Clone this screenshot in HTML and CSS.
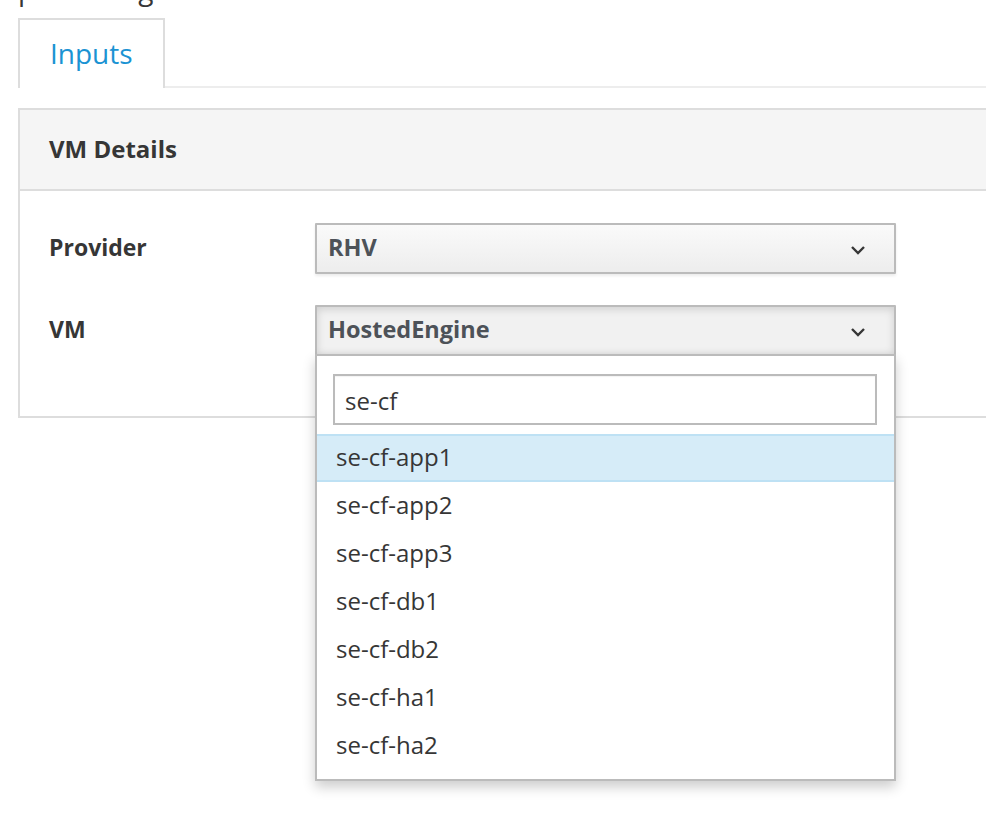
FILE: index.html
```html
<!DOCTYPE html>
<html lang="en">
<head>
<meta charset="utf-8">
<title>Inputs</title>
<link rel="stylesheet" href="styles.css">
</head>
<body>
<h1 class="page-title">publishing</h1>
<div class="content">
  <ul class="tabs">
    <li class="tab active">Inputs</li>
  </ul>
  <section class="panel">
    <div class="panel-heading">VM Details</div>
    <div class="panel-body">
      <div class="form-row">
        <label class="form-label">Provider</label>
        <div class="select">
          <button class="select-btn">
            <span class="select-text">RHV</span>
            <svg class="caret" width="16" height="10" viewBox="0 0 16 10"><polyline points="2,2 8,8 14,2" fill="none" stroke="#363636" stroke-width="2.4"/></svg>
          </button>
        </div>
      </div>
      <div class="form-row">
        <label class="form-label">VM</label>
        <div class="select open">
          <button class="select-btn">
            <span class="select-text">HostedEngine</span>
            <svg class="caret" width="16" height="10" viewBox="0 0 16 10"><polyline points="2,2 8,8 14,2" fill="none" stroke="#363636" stroke-width="2.4"/></svg>
          </button>
          <div class="menu">
            <div class="search-box"><div class="search-input">se-cf</div></div>
            <ul class="options">
              <li class="option active">se-cf-app1</li>
              <li class="option">se-cf-app2</li>
              <li class="option">se-cf-app3</li>
              <li class="option">se-cf-db1</li>
              <li class="option">se-cf-db2</li>
              <li class="option">se-cf-ha1</li>
              <li class="option">se-cf-ha2</li>
            </ul>
          </div>
        </div>
      </div>
    </div>
  </section>
</div>
</body>
</html>
```
FILE: styles.css
```css
html {
  overflow-x: hidden;
}

body {
  margin: 0;
  padding: 0;
  min-height: 822px;
  background: #ffffff;
  font-family: "Open Sans", "DejaVu Sans", sans-serif;
  color: #363636;
}

.page-title {
  margin: -27px 0 0 0;
  padding-left: 18px;
  font-size: 28px;
  font-weight: 400;
  line-height: 32px;
  height: 32px;
  color: #363636;
}

.content {
  margin: 13px -40px 0 18px;
}

.tabs {
  list-style: none;
  margin: 0;
  padding: 0;
  display: flex;
  border-bottom: 2px solid #ededed;
  height: 68px;
}

.tab {
  box-sizing: border-box;
  border: 2px solid #dddddd;
  border-bottom: none;
  background: #ffffff;
  padding: 0 30px 2px 30px;
  height: 70px;
  line-height: 66px;
  font-size: 28px;
  color: #1b93d3;
  margin-bottom: -2px;
}

.panel {
  margin-top: 20px;
  border: 2px solid #dddddd;
}

.panel-heading {
  background: #f5f5f5;
  border-bottom: 2px solid #dddddd;
  height: 79px;
  line-height: 77px;
  padding-left: 29px;
  font-size: 24px;
  font-weight: 700;
  color: #363636;
}

.panel-body {
  padding: 32px 0 60px 29px;
  display: flex;
  flex-direction: column;
  gap: 31px;
}

.form-row {
  display: flex;
  align-items: center;
}

.form-label {
  width: 266px;
  font-size: 23px;
  font-weight: 700;
  color: #363636;
  padding-bottom: 3px;
}

.select {
  position: relative;
  width: 581px;
}

.select-btn {
  box-sizing: border-box;
  width: 581px;
  height: 51px;
  border: 2px solid #bbbbbb;
  border-radius: 1px;
  background: linear-gradient(to bottom, #fafafa 0%, #ededed 100%);
  box-shadow: 0 2px 3px rgba(3, 3, 3, 0.08);
  display: flex;
  align-items: center;
  justify-content: space-between;
  padding: 0 28px 3px 11px;
  font-family: "Open Sans", "DejaVu Sans", sans-serif;
  font-size: 23.5px;
  font-weight: 700;
  color: #4d5258;
  cursor: pointer;
}

.select.open .select-btn {
  background: #f1f1f1;
  box-shadow: inset 0 2px 8px rgba(3, 3, 3, 0.15);
}

.caret {
  display: block;
  margin-top: 5px;
}

.menu {
  position: absolute;
  left: 0;
  top: 49px;
  box-sizing: border-box;
  width: 581px;
  border: 2px solid #bbbbbb;
  background: #ffffff;
  box-shadow: 0 6px 12px rgba(0, 0, 0, 0.2);
  padding-bottom: 9px;
  z-index: 10;
}

.search-box {
  padding: 18px 17px 9px 16px;
}

.search-input {
  box-sizing: border-box;
  height: 51px;
  border: 2px solid #bbbbbb;
  padding: 2px 10px 0 10px;
  line-height: 45px;
  font-size: 24px;
  color: #363636;
  box-shadow: inset 0 1px 1px rgba(3, 3, 3, 0.05);
}

.options {
  list-style: none;
  margin: 0;
  padding: 0;
}

.option {
  box-sizing: border-box;
  height: 48px;
  line-height: 44px;
  padding-left: 19px;
  font-size: 24px;
  color: #363636;
  border-top: 1px solid transparent;
  border-bottom: 1px solid transparent;
}

.option.active {
  background: #d6ecf8;
  border-top: 2px solid #bee1f4;
  border-bottom: 2px solid #bee1f4;
  line-height: 42px;
}
```
